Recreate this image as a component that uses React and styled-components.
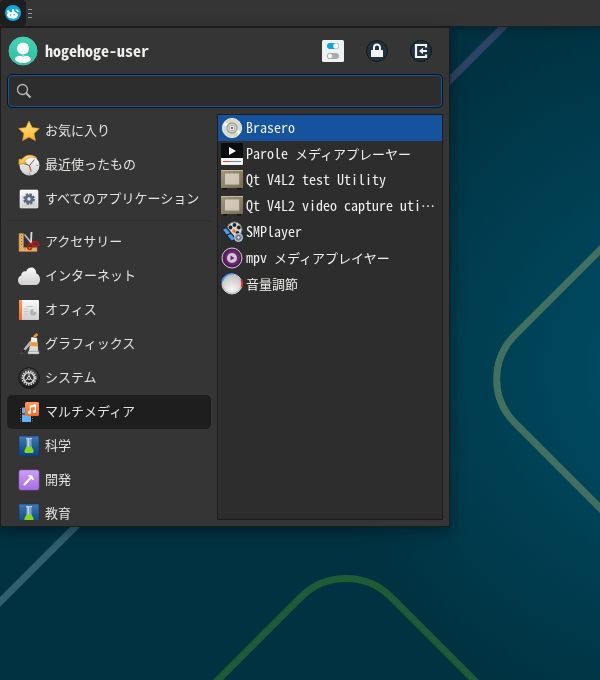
import React, { useState } from "react";
import styled, { createGlobalStyle } from "styled-components";

const mono = `"Noto Sans Mono CJK JP", "DejaVu Sans Mono", "Noto Sans CJK JP", monospace`;
const sans = `"Noto Sans CJK JP", "Noto Sans", sans-serif`;

const GlobalStyle = createGlobalStyle`
  *, *::before, *::after {
    box-sizing: border-box;
  }

  body {
    margin: 0;
    background: #003241;
    font-family: ${sans};
    font-size: 13px;
    color: #e2e2e0;
  }

  button, input {
    font: inherit;
    color: inherit;
    border: none;
    background: none;
    padding: 0;
    margin: 0;
  }

  svg {
    display: block;
    flex: none;
  }
`;

const Desktop = styled.main`
  min-height: 100vh;
  overflow: hidden;
`;

const Backdrop = styled.svg`
  position: fixed;
  inset: 0;
  width: 100%;
  height: 100%;
  z-index: -1;
`;

const Panel = styled.header`
  display: flex;
  align-items: center;
  height: 27px;
  background: #353535;
  border-bottom: 1px solid #1f1f1f;
  box-shadow: 0 2px 12px rgba(0, 0, 0, 0.3);
`;

const MenuButton = styled.button`
  display: grid;
  place-items: center;
  width: 26px;
  height: 26px;
  border-radius: 4px;
  background: #1e1e1e;
`;

const Handle = styled.span`
  display: grid;
  gap: 3px;
  margin-left: 2px;

  i {
    width: 4px;
    height: 1px;
    background: #999;
  }
`;

const Menu = styled.section`
  display: flex;
  flex-direction: column;
  gap: 6px;
  width: 75%;
  min-width: min(450px, 100%);
  height: calc(100vh - 180px);
  padding: 6px;
  background: #353535;
  border: 1px solid #1c1c1c;
  box-shadow: 0 4px 16px rgba(0, 0, 0, 0.4);
`;

const Profile = styled.div`
  display: flex;
  align-items: center;
  gap: 6px;
  height: 34px;
`;

const UserName = styled.h1`
  flex: 1;
  margin: 0;
  padding-bottom: 2px;
  font-family: ${mono};
  font-size: 16px;
  line-height: 24px;
  font-weight: bold;
  color: #f0f0ee;
`;

const Actions = styled.div`
  display: flex;
`;

const Action = styled.button`
  display: grid;
  place-items: center;
  width: 44px;
  height: 34px;
`;

const Search = styled.label`
  display: flex;
  align-items: center;
  gap: 6px;
  height: 34px;
  padding: 0 8px;
  background: #2d2d2d;
  border: 1px solid #0c1420;
  border-radius: 5px;
  box-shadow: inset 0 0 0 1px #1553a0;

  input {
    flex: 1;
    min-width: 0;
    outline: none;
  }
`;

const Columns = styled.div`
  flex: 1;
  min-height: 0;
  display: grid;
  grid-template-columns: 204px minmax(0, 1fr);
  gap: 6px;
`;

const Categories = styled.nav`
  overflow: hidden;
`;

const Category = styled.button`
  display: flex;
  align-items: center;
  gap: 5px;
  width: 100%;
  height: 34px;
  padding: 0 11px;
  border-radius: 5px;
  white-space: nowrap;
  background: ${(p) => (p.$active ? "#1e1e1e" : "transparent")};
`;

const CategoryName = styled.span`
  padding-bottom: 2px;
  line-height: 14px;
`;

const Divider = styled.hr`
  height: 1px;
  margin: 4px 0;
  border: none;
  background: #2c2c2c;
`;

const Apps = styled.div`
  background: #2d2d2d;
  border: 1px solid #1c1c1c;
  overflow: hidden;
`;

const AppRow = styled.button`
  display: flex;
  align-items: center;
  gap: 3px;
  width: 100%;
  height: 26px;
  padding: 0 4px 0 3px;
  text-align: left;
  color: #f0f0ee;
  background: ${(p) => (p.$active ? "#15539e" : "transparent")};
`;

const AppName = styled.span`
  min-width: 0;
  padding-bottom: 2px;
  overflow: hidden;
  white-space: nowrap;
  text-overflow: ellipsis;
  font-family: ${mono};
  font-size: 14px;
  line-height: 22px;
`;

const Kana = styled.span`
  font-family: ${sans};
  font-size: 13px;
`;

const Icon = ({ size = 22, children }) => (
  <svg width={size} height={size} viewBox={`0 0 ${size} ${size}`} aria-hidden="true">
    {children}
  </svg>
);

// shared gradients, referenced by id from every icon
const Defs = () => (
  <defs>
    <radialGradient id="sea" gradientUnits="userSpaceOnUse" cx="690" cy="370" r="370">
      <stop offset="0" stopColor="#00526d" />
      <stop offset="0.3" stopColor="#00475d" />
      <stop offset="1" stopColor="#003241" />
    </radialGradient>
    <linearGradient id="mint" x2="0" y2="1">
      <stop offset="0" stopColor="#43d6b5" />
      <stop offset="1" stopColor="#2bbd9e" />
    </linearGradient>
    <linearGradient id="gold" x2="0" y2="1">
      <stop offset="0" stopColor="#ffe27a" />
      <stop offset="1" stopColor="#f5b52e" />
    </linearGradient>
    <linearGradient id="paper" x2="0" y2="1">
      <stop offset="0" stopColor="#fafafa" />
      <stop offset="1" stopColor="#cfcfcf" />
    </linearGradient>
    <linearGradient id="coal" x2="0" y2="1">
      <stop offset="0" stopColor="#4a4a4a" />
      <stop offset="1" stopColor="#1c1c1c" />
    </linearGradient>
    <linearGradient id="orange" x2="0" y2="1">
      <stop offset="0" stopColor="#ff9a55" />
      <stop offset="1" stopColor="#ee6c2a" />
    </linearGradient>
    <linearGradient id="blue" x2="0" y2="1">
      <stop offset="0" stopColor="#3e78b4" />
      <stop offset="1" stopColor="#064488" />
    </linearGradient>
    <linearGradient id="violet" x2="0" y2="1">
      <stop offset="0" stopColor="#cd9ef7" />
      <stop offset="1" stopColor="#a56de2" />
    </linearGradient>
    <linearGradient id="beige" x2="1" y2="1">
      <stop offset="0" stopColor="#a39a7c" />
      <stop offset="1" stopColor="#746a52" />
    </linearGradient>
    <linearGradient id="screen" x2="1" y2="1">
      <stop offset="0" stopColor="#d6cfbe" />
      <stop offset="1" stopColor="#c9c1ae" />
    </linearGradient>
    <radialGradient id="knob" cx="0.5" cy="0.8" r="0.8">
      <stop offset="0" stopColor="#f6f6f6" />
      <stop offset="1" stopColor="#c2c2c2" />
    </radialGradient>
  </defs>
);

const Wallpaper = () => (
  <Backdrop viewBox="0 0 600 680" preserveAspectRatio="xMidYMid slice" aria-hidden="true">
    <Defs />
    <rect width="600" height="680" fill="url(#sea)" />
    <g fill="none" strokeWidth="7">
      <path d="M520 10 430 100" stroke="#2e4467" />
      <path d="M610 240 515 335a62 62 0 0 0 0 88l95 95" stroke="#42705f" />
      <path d="M208 690 301 597a64 64 0 0 1 90 0l93 93" stroke="#1d5c36" />
      <path d="M-10 612 90 512" stroke="#2d6170" />
    </g>
  </Backdrop>
);

const Mouse = () => (
  <Icon size={18}>
    <circle cx="9" cy="9" r="8" fill="#0aaae0" />
    <path d="M3 6.500 4.500 6l1.700 2.300L8 8V5.200L9.600 5l1.200 3 2.700 1.200.5 2.300-1.200 2.300-3 1L5 14 2.800 11.500 3.500 9.500Z" fill="#fff" />
    <path d="m11.500 5.200 2.300.6L15.500 8l-1.800-.3-1.500-1Z" fill="#fff" />
    <circle cx="6.500" cy="11" r=".7" fill="#0aaae0" />
    <circle cx="10" cy="10.800" r=".7" fill="#0aaae0" />
  </Icon>
);

const Avatar = () => (
  <Icon size={32}>
    <circle cx="16" cy="16" r="14" fill="url(#mint)" stroke="#48c9ac" />
    <circle cx="16" cy="13.500" r="6" fill="#fff" />
    <ellipse cx="16" cy="24" rx="8" ry="4" fill="#fff" />
    <path d="M9.500 19.500q6.500 3 13 0" fill="none" stroke="#35c6a7" strokeWidth="1" />
  </Icon>
);

const Settings = () => (
  <Icon>
    <rect width="22" height="22" rx="1.500" fill="#eff1f2" />
    <rect x="5" y="3" width="12" height="6" rx="3" fill="#0ba5dc" />
    <circle cx="14" cy="6" r="2.700" fill="#fff" stroke="#b5d5df" strokeWidth=".6" />
    <rect x="5" y="13" width="12" height="6" rx="3" fill="#a4adb1" />
    <circle cx="8" cy="16" r="2.700" fill="#f4f4f4" stroke="#8e979b" strokeWidth=".6" />
  </Icon>
);

const Lock = () => (
  <Icon>
    <circle cx="11" cy="11" r="10.500" fill="#22323c" stroke="#11191d" />
    <path d="M8 10V7.500a3 3 0 0 1 6 0V10" fill="none" stroke="#f2f2f2" strokeWidth="2" />
    <rect x="5" y="10" width="12" height="7" rx=".5" fill="#f2f2f2" />
  </Icon>
);

const Logout = () => (
  <Icon>
    <circle cx="11" cy="11" r="10.500" fill="#22323c" stroke="#11191d" />
    <path d="M16 7.500V5H6v12h10v-2.500" fill="none" stroke="#f2f2f2" strokeWidth="2.200" />
    <path d="m9 11 4-3.300V10h4v2h-4v2.300Z" fill="#f2f2f2" />
  </Icon>
);

const Magnifier = () => (
  <Icon size={16}>
    <circle cx="6.500" cy="6.500" r="5" fill="none" stroke="#b8b8b8" strokeWidth="1.300" />
    <path d="m10.300 10.300 4.200 4.200" stroke="#b8b8b8" strokeWidth="2" />
  </Icon>
);

const Star = () => (
  <Icon>
    <path d="m11 1 3.100 6.600 7.200.9-5.300 5 1.400 7.100L11 17.100l-6.400 3.500L6 13.500l-5.300-5 7.200-.9Z" fill="url(#gold)" stroke="#e8a52c" strokeWidth=".6" />
  </Icon>
);

const Recent = () => (
  <Icon>
    <circle cx="11.500" cy="11.500" r="10" fill="url(#paper)" />
    <path d="m5.500 9.500 6 2 5-6" fill="none" stroke="#555" strokeWidth=".9" />
    <path d="m11.500 11.500 1.500 6" stroke="#e8432e" strokeWidth="1.200" />
    <path d="M11.500 18.500v2M18.500 11.500h2" stroke="#999" />
    <path d="M19 4C14-.5 7.500.500 4.300 5.300L1 5l-.3 5.500 7.800-1.200-2-2.300C9 3.500 13.500 2.200 19 4Z" fill="url(#gold)" stroke="#b98518" strokeWidth=".6" />
  </Icon>
);

const AllApps = () => (
  <Icon>
    <rect x="2" y="2" width="18" height="18" rx="1" fill="url(#paper)" stroke="#fff" strokeWidth=".6" />
    <circle cx="11" cy="11" r="4.700" fill="none" stroke="#566882" strokeWidth="2.400" strokeDasharray="2.200 1.490" />
    <circle cx="11" cy="11" r="3.200" fill="none" stroke="#566882" strokeWidth="2.800" />
  </Icon>
);

const Accessories = () => (
  <Icon>
    <path d="M1 2.500h4.500v14H19v4H1Z" fill="#e3ae66" stroke="#b57d36" strokeWidth=".7" />
    <path d="M3.500 4v1m0 2v1m0 2v1m0 2v1m3 4h1m2 0h1m2 0h1" stroke="#9a6d31" />
    <path d="m6.500 3.500 6.500 8" stroke="#bfbfbf" strokeWidth="1.600" />
    <path d="M13.500 1 13 12" stroke="#dcdcdc" strokeWidth="1.800" />
    <ellipse cx="12" cy="15.500" rx="2" ry="3" transform="rotate(15 12 15.500)" fill="none" stroke="#c81414" strokeWidth="1.500" />
    <ellipse cx="17.500" cy="12.800" rx="3.400" ry="2" transform="rotate(20 17.500 12.800)" fill="none" stroke="#c81414" strokeWidth="1.500" />
  </Icon>
);

const Cloud = () => (
  <Icon>
    <path d="M5 20C1.500 20 0 17.800 0 15.200c0-2.600 1.600-4.300 3.300-4.800C3 7.500 6 5.500 8.200 6.500 9.500 1 18.300.500 18.300 8.500 21 9.500 22 12 22 14.500c0 3.500-2 5.500-5 5.500Z" fill="url(#paper)" />
  </Icon>
);

const Office = () => (
  <Icon>
    <rect x="1" y="1" width="20" height="20" rx="1" fill="url(#paper)" />
    <path d="M1 1h3v20H1Z" fill="url(#orange)" />
    <path d="M8 7.500h7M5.500 10h5M5.500 12.500h5M5.500 15h5" stroke="#c8c8c8" />
    <path d="M15.500 10v3h3a3.300 3.300 0 1 1-3-3Z" fill="#b5b5b5" />
  </Icon>
);

const Graphics = () => (
  <Icon>
    <path d="M1 21q3-1 4.500-5L12 8l2 2-6.500 7.500Q5 21 1 21Z" fill="#b5b5b5" />
    <path d="M1 21q3-1 4.500-5l2 1.500Q5 21 1 21Z" fill="#222" />
    <path d="m13.500 4 5.500 1 1.500 15h-10Z" fill="url(#paper)" />
    <path d="m12.800 9 6.700.5.400 4-7.800-.5Z" fill="#ee9a32" />
    <path d="m16 4 3.500-3" stroke="#e7962f" strokeWidth="2.500" />
    <path d="M10 18.500h11V21H10Z" fill="#ddd" stroke="#888" strokeWidth=".5" />
  </Icon>
);

const System = () => (
  <Icon>
    <circle cx="11" cy="11" r="10.300" fill="url(#coal)" stroke="#171717" />
    <circle cx="11" cy="11" r="6.700" fill="none" stroke="#e5e5e5" strokeWidth="1.600" strokeDasharray="1.400 1.100" />
    <circle cx="11" cy="11" r="5.300" fill="none" stroke="#e5e5e5" strokeWidth="1.300" />
    <circle cx="11" cy="11" r="1.500" fill="#333" stroke="#e5e5e5" />
    <path d="M11 6v4m-4.300 3.700 3-2m5.600 2-3-2" stroke="#e5e5e5" />
  </Icon>
);

const Multimedia = () => (
  <Icon>
    <rect x="1" y="6" width="15" height="15" fill="#151515" />
    <path d="M2.500 7v14M14.500 7v14" stroke="#777" strokeWidth="1.300" strokeDasharray="1 1.500" />
    <path d="M4 6.500h9v6H4Zm0 7h9V21H4Z" fill="#62b4f6" />
    <rect x="7" y="1" width="14" height="14" rx="1.500" fill="url(#orange)" />
    <path d="M12.300 11.500V5l5-1v6.500M12.300 6.200l5-1" fill="none" stroke="#fff" strokeWidth="1.200" />
    <circle cx="11.400" cy="11.500" r="1.500" fill="#fff" />
    <circle cx="16.400" cy="10.500" r="1.500" fill="#fff" />
  </Icon>
);

const Flask = () => (
  <Icon>
    <rect x="1" y="1" width="20" height="20" rx=".5" fill="url(#blue)" stroke="#143358" strokeWidth=".6" />
    <path d="M8.500 4h5v8l1.500 4v2H7v-2l1.500-4Z" fill="#7fa3bd" />
    <path d="M9.500 4h1.500v8H9.500Z" fill="#bdd3df" />
    <path d="M8.500 11.500h5l2 4q.5 2.500-2 2.500h-5q-2.500 0-2-2.500Z" fill="#86d913" />
    <path d="M8 3.700h6" stroke="#d3e2eb" />
  </Icon>
);

const Hammer = () => (
  <Icon>
    <rect x="1" y="1" width="20" height="20" rx="2" fill="url(#violet)" stroke="#8a5cbf" strokeWidth=".6" />
    <path d="m6.500 15.500 7-7.500" stroke="#fff" strokeWidth="2" strokeLinecap="round" />
    <path d="M9.500 6.500q3-1.300 5 .5l1.500 3.200-1.300 1-3.700-3.900Z" fill="#fff" />
  </Icon>
);

const Disc = () => (
  <Icon>
    <circle cx="11" cy="11" r="9.600" fill="#d9d9d3" stroke="#f0f0ea" />
    <path d="M11 11 6 3.500A9 9 0 0 1 9 2.300ZM11 11l5 7.500a9 9 0 0 1-3 1.200Z" fill="#e6da7a" />
    <path d="M11 11 2.500 8A9 9 0 0 1 4.500 5ZM11 11l8.500 3a9 9 0 0 1-2 3Z" fill="#f8f8f8" />
    <circle cx="11" cy="11" r="5" fill="#d0d0c8" stroke="#a5a595" strokeWidth="1.300" />
    <circle cx="11" cy="11" r="2.700" fill="#fff" stroke="#b5b5b5" />
    <circle cx="11" cy="11" r="1.300" fill="#63738b" />
  </Icon>
);

const Parole = () => (
  <Icon>
    <rect width="22" height="22" rx="1" fill="#080d10" />
    <path d="M0 15h22v6q0 1-1 1H1q-1 0-1-1Z" fill="#f2f3f3" />
    <path d="M8 4v8l7-4Z" fill="#fff" />
    <path d="M2 18.500h18" stroke="#76868e" />
    <path d="M2 18.500h7" stroke="#e44b28" />
  </Icon>
);

const Television = () => (
  <Icon>
    <path d="M2 19h4v1.500H2Zm14 0h4v1.500h-4Z" fill="#16140f" />
    <rect y="1" width="22" height="18" rx=".5" fill="url(#beige)" />
    <path d="M0 1.500h22" stroke="#c5bda0" />
    <rect x="3.500" y="4" width="15" height="12" rx="1" fill="url(#screen)" stroke="#928971" />
  </Icon>
);

const Reel = () => (
  <Icon>
    <circle cx="13.500" cy="8.500" r="7.500" fill="#d6d6d6" stroke="#777" />
    <g fill="#232323">
      <circle cx="13.500" cy="4" r="1.900" />
      <circle cx="9.500" cy="6.500" r="1.900" />
      <circle cx="17.800" cy="6.500" r="1.900" />
      <circle cx="16.500" cy="12" r="1.900" />
    </g>
    <path d="m0 8 5.500-2.500L16 18.500 10 21Z" fill="#1b2838" />
    <path d="m2 8.500 3-1.200L9 12l-3.300 1.500Zm4.500 6L10 13l4 5-3.300 1.500Z" fill="#4d9de6" />
    <circle cx="13" cy="10" r="1.700" fill="#ef7422" />
    <circle cx="17.500" cy="16.500" r="4" fill="#8692ae" stroke="#c9cedb" />
    <circle cx="17.500" cy="16.500" r="1.800" fill="#dfe3ec" stroke="#56617a" />
  </Icon>
);

const Mpv = () => (
  <Icon>
    <circle cx="11" cy="11" r="10" fill="#4f1c57" stroke="#d7c5da" />
    <circle cx="11.500" cy="10.500" r="7.500" fill="#672b6d" />
    <circle cx="11" cy="11" r="5" fill="#d5c6d8" />
    <path d="M9.500 8.500v5l4-2.500Z" fill="#672b6d" />
  </Icon>
);

const Volume = () => (
  <Icon>
    <circle cx="11" cy="11" r="10" fill="#bdbdbd" stroke="#ccc" />
    <path d="M1 8.500A10.300 10.300 0 0 1 13 1" fill="none" stroke="#3f92e8" strokeWidth="1.500" />
    <path d="M20.500 7q1.300 4 0 7" fill="none" stroke="#ec2626" strokeWidth="2" />
    <circle cx="11" cy="11" r="9" fill="url(#knob)" />
  </Icon>
);

const shortcuts = [
  { label: "お気に入り", Glyph: Star },
  { label: "最近使ったもの", Glyph: Recent },
  { label: "すべてのアプリケーション", Glyph: AllApps },
];

const categories = [
  { label: "アクセサリー", Glyph: Accessories },
  { label: "インターネット", Glyph: Cloud },
  { label: "オフィス", Glyph: Office },
  { label: "グラフィックス", Glyph: Graphics },
  { label: "システム", Glyph: System },
  { label: "マルチメディア", Glyph: Multimedia },
  { label: "科学", Glyph: Flask },
  { label: "開発", Glyph: Hammer },
  { label: "教育", Glyph: Flask },
];

const apps = [
  { name: "Brasero", Glyph: Disc },
  { name: "Parole ", kana: "メディアプレーヤー", Glyph: Parole },
  { name: "Qt V4L2 test Utility", Glyph: Television },
  { name: "Qt V4L2 video capture utility", Glyph: Television },
  { name: "SMPlayer", Glyph: Reel },
  { name: "mpv ", kana: "メディアプレイヤー", Glyph: Mpv },
  { name: "", kana: "音量調節", Glyph: Volume },
];

export default function App() {
  const [category, setCategory] = useState("マルチメディア");
  const [selected, setSelected] = useState(0);

  const renderCategory = ({ label, Glyph }) => (
    <Category key={label} $active={label === category} onClick={() => setCategory(label)}>
      <Glyph />
      <CategoryName>{label}</CategoryName>
    </Category>
  );

  return (
    <>
      <GlobalStyle />
      <Desktop>
        <Wallpaper />
        <Panel>
          <MenuButton aria-label="メニュー">
            <Mouse />
          </MenuButton>
          <Handle>
            <i />
            <i />
            <i />
          </Handle>
        </Panel>
        <Menu>
          <Profile>
            <Avatar />
            <UserName>hogehoge-user</UserName>
            <Actions>
              <Action aria-label="設定">
                <Settings />
              </Action>
              <Action aria-label="ロック">
                <Lock />
              </Action>
              <Action aria-label="ログアウト">
                <Logout />
              </Action>
            </Actions>
          </Profile>
          <Search>
            <Magnifier />
            <input type="text" aria-label="検索" />
          </Search>
          <Columns>
            <Categories>
              {shortcuts.map(renderCategory)}
              <Divider />
              {categories.map(renderCategory)}
            </Categories>
            <Apps>
              {apps.map(({ name, kana, Glyph }, i) => (
                <AppRow key={name + kana} $active={i === selected} onClick={() => setSelected(i)}>
                  <Glyph />
                  <AppName>
                    {name}
                    {kana && <Kana>{kana}</Kana>}
                  </AppName>
                </AppRow>
              ))}
            </Apps>
          </Columns>
        </Menu>
      </Desktop>
    </>
  );
}
